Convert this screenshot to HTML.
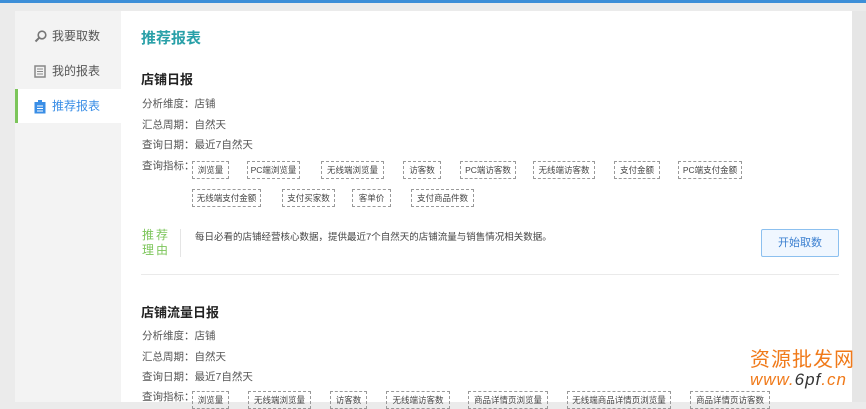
<!DOCTYPE html><html><head><meta charset="utf-8"><style>
*{margin:0;padding:0;box-sizing:border-box}
body{width:866px;height:402px;overflow:hidden;background:#ebebeb;font-family:"Liberation Sans","Noto Sans CJK SC",sans-serif;position:relative;color:#555}
.top{position:absolute;left:0;top:0;width:866px;height:3px;background:#3d8fd8}
.side{position:absolute;left:15px;top:11px;width:106px;height:391px;background:#f3f3f3}
.nav{position:absolute;left:0;width:106px;height:34px;font-size:12px;color:#555;line-height:34px;padding-left:37px}
.nav.on{background:#fff;border-left:3px solid #7cc55a;color:#3a8ee6;padding-left:34px}
.ic{position:absolute;left:19px;top:11px}
.main{position:absolute;left:121px;top:11px;width:731px;height:391px;background:#fff}
.sb{position:absolute;left:852px;top:11px;width:14px;height:391px;background:#e6e6e6}
.a{position:absolute;white-space:nowrap}
h1{position:absolute;left:141px;top:27px;font-size:15px;color:#29a0a8;font-weight:bold}
h2{position:absolute;font-size:13px;color:#222;font-weight:bold}
.l{position:absolute;left:142px;font-size:10.5px;color:#555}
.t{position:absolute;height:18px;border:1px dashed #999;font-size:8.5px;line-height:16px;text-align:center;color:#444;white-space:nowrap;overflow:hidden}
</style></head><body>
<div class="top"></div>
<div class="side">
<div class="nav" style="top:8px"><svg class="ic" width="13" height="13" viewBox="0 0 13 13"><circle cx="8" cy="5" r="3.8" fill="none" stroke="#777" stroke-width="1.6"/><path d="M5.3 7.7L1.5 11.5" stroke="#777" stroke-width="2"/></svg>我要取数</div>
<div class="nav" style="top:43px"><svg class="ic" width="12" height="13" viewBox="0 0 12 13"><rect x="1" y="1" width="10" height="11" fill="none" stroke="#888" stroke-width="1.5"/><path d="M3 4h6M3 6.5h6M3 9h6" stroke="#888"/></svg>我的报表</div>
<div class="nav on" style="top:78px"><svg class="ic" style="left:16px" width="12" height="14" viewBox="0 0 12 14"><rect x="0.5" y="2" width="11" height="11.5" fill="#3a8ee6"/><rect x="4" y="0" width="4" height="3" fill="#3a8ee6"/><path d="M3 6h6M3 8.5h6M3 11h6" stroke="#fff"/></svg>推荐报表</div>
</div>
<div class="main"></div>
<div class="sb"></div>
<h1>推荐报表</h1>
<h2 style="left:141px;top:69px">店铺日报</h2>
<div class="l" style="top:96px">分析维度：店铺</div>
<div class="l" style="top:117px">汇总周期：自然天</div>
<div class="l" style="top:137px">查询日期：最近7自然天</div>
<div class="l" style="top:158px">查询指标：</div>
<div class="t" style="left:192px;top:161px;width:37px">浏览量</div>
<div class="t" style="left:247px;top:161px;width:53px">PC端浏览量</div>
<div class="t" style="left:321px;top:161px;width:63px">无线端浏览量</div>
<div class="t" style="left:403px;top:161px;width:38px">访客数</div>
<div class="t" style="left:460px;top:161px;width:56px">PC端访客数</div>
<div class="t" style="left:533px;top:161px;width:62px">无线端访客数</div>
<div class="t" style="left:614px;top:161px;width:46px">支付金额</div>
<div class="t" style="left:678px;top:161px;width:64px">PC端支付金额</div>
<div class="t" style="left:192px;top:189px;width:69px">无线端支付金额</div>
<div class="t" style="left:282px;top:189px;width:53px">支付买家数</div>
<div class="t" style="left:352px;top:189px;width:39px">客单价</div>
<div class="t" style="left:411px;top:189px;width:63px">支付商品件数</div>
<div class="a" style="left:142px;top:228px;font-size:12px;color:#7cc55a;line-height:15px;letter-spacing:2px">推荐<br>理由</div>
<div class="a" style="left:180px;top:229px;width:1px;height:28px;background:#e5e5e5"></div>
<div class="a" style="left:195px;top:229px;font-size:9.5px;color:#444">每日必看的店铺经营核心数据，提供最近7个自然天的店铺流量与销售情况相关数据。</div>
<div class="a" style="left:761px;top:229px;width:78px;height:28px;border:1px solid #8cc0ef;border-radius:2px;background:#f0f7ff;color:#3a7fd0;font-size:11px;text-align:center;line-height:26px">开始取数</div>
<div class="a" style="left:141px;top:274px;width:698px;height:1px;background:#eaeaea"></div>
<h2 style="left:141px;top:302px">店铺流量日报</h2>
<div class="l" style="top:328px">分析维度：店铺</div>
<div class="l" style="top:349px">汇总周期：自然天</div>
<div class="l" style="top:369px">查询日期：最近7自然天</div>
<div class="l" style="top:389px">查询指标：</div>
<div class="t" style="left:192px;top:391px;width:37px">浏览量</div>
<div class="t" style="left:248px;top:391px;width:63px">无线端浏览量</div>
<div class="t" style="left:330px;top:391px;width:37px">访客数</div>
<div class="t" style="left:386px;top:391px;width:64px">无线端访客数</div>
<div class="t" style="left:468px;top:391px;width:80px">商品详情页浏览量</div>
<div class="t" style="left:567px;top:391px;width:104px">无线端商品详情页浏览量</div>
<div class="t" style="left:690px;top:391px;width:80px">商品详情页访客数</div>
<div class="a" style="left:750px;top:343px;font-size:20px;color:#f07a1a;font-family:'Noto Sans CJK SC',sans-serif;letter-spacing:1px">资源批发网</div>
<div class="a" style="left:750px;top:370px;font-size:17px;color:#f07a1a;font-style:italic;letter-spacing:1px">www.<span style="color:#333">6pf</span>.cn</div>
</body></html>
